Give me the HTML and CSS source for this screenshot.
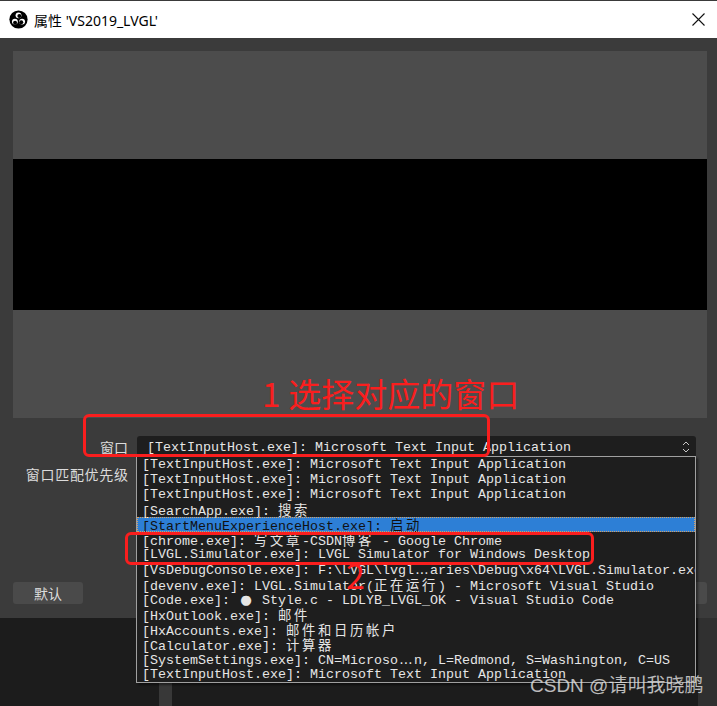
FILE: index.html
```html
<!DOCTYPE html>
<html lang="zh-CN">
<head>
<meta charset="utf-8">
<title>属性 'VS2019_LVGL'</title>
<link rel="stylesheet" href="styles.css">
</head>
<body>
<div class="screen">
  <header class="titlebar">
    <svg class="app-icon" width="19" height="19" viewBox="0 0 20 20">
      <circle cx="10" cy="10" r="9.6" fill="#000"/>
      <circle cx="10" cy="5.6" r="3.1" fill="#fff"/>
      <circle cx="10.9" cy="6.3" r="2.1" fill="#000"/>
      <circle cx="6.2" cy="12.2" r="3.1" fill="#fff"/>
      <circle cx="6.4" cy="13.3" r="2.1" fill="#000"/>
      <circle cx="13.8" cy="12.2" r="3.1" fill="#fff"/>
      <circle cx="12.9" cy="12.8" r="2.1" fill="#000"/>
    </svg>
    <span class="title">属性 'VS2019_LVGL'</span>
    <svg class="close" width="13" height="13" viewBox="0 0 13 13">
      <path d="M0.5 0.5 L12.5 12.5 M12.5 0.5 L0.5 12.5" stroke="#111" stroke-width="1.1" fill="none"/>
    </svg>
  </header>

  <main class="dialog">
    <div class="preview">
      <div class="preview-band"></div>
    </div>

    <div class="form">
      <label class="label">窗口</label>
      <div class="combo">
        <span class="combo-text">[TextInputHost.exe]: Microsoft Text Input Application</span>
        <svg class="chevrons" width="8" height="14" viewBox="0 0 8 14">
          <path d="M1 5 L4 2 L7 5 M1 9 L4 12 L7 9" stroke="#c8c8c8" stroke-width="1" fill="none"/>
        </svg>
      </div>
      <label class="label spaced">窗口匹配优先级</label>
      <div class="combo"></div>
    </div>

    <div class="buttons">
      <button class="btn">默认</button>
      <div class="btn-group">
        <button class="btn">确定</button>
        <button class="btn">取消</button>
      </div>
    </div>
  </main>

  <div class="backdrop">
    <div class="backdrop-bar"></div>
    <div class="backdrop-right"></div>
  </div>

  <ul class="dropdown">
    <li>[TextInputHost.exe]: Microsoft Text Input Application</li>
    <li>[TextInputHost.exe]: Microsoft Text Input Application</li>
    <li>[TextInputHost.exe]: Microsoft Text Input Application</li>
    <li>[SearchApp.exe]: <span class="cjk">搜索</span></li>
    <li class="selected">[StartMenuExperienceHost.exe]: <span class="cjk">启动</span></li>
    <li>[chrome.exe]: <span class="cjk">写文章</span>-CSDN<span class="cjk">博客</span> - Google Chrome</li>
    <li>[LVGL.Simulator.exe]: LVGL Simulator for Windows Desktop</li>
    <li>[VsDebugConsole.exe]: F:\LVGL\lvgl<span class="wide">…</span>aries\Debug\x64\LVGL.Simulator.exe</li>
    <li>[devenv.exe]: LVGL.Simulator(<span class="cjk">正在运行</span>) - Microsoft Visual Studio</li>
    <li>[Code.exe]: <span class="wide">●</span> Style.c - LDLYB_LVGL_OK - Visual Studio Code</li>
    <li>[HxOutlook.exe]: <span class="cjk">邮件</span></li>
    <li>[HxAccounts.exe]: <span class="cjk">邮件和日历帐户</span></li>
    <li>[Calculator.exe]: <span class="cjk">计算器</span></li>
    <li>[SystemSettings.exe]: CN=Microso<span class="wide">…</span>n, L=Redmond, S=Washington, C=US</li>
    <li>[TextInputHost.exe]: Microsoft Text Input Application</li>
  </ul>

  <div class="mark mark-box1"></div>
  <div class="mark mark-text1"><span class="num">1</span>选择对应的窗口</div>
  <div class="mark mark-box2"></div>
  <div class="mark mark-text2">2</div>

  <div class="watermark">CSDN @请叫我晓鹏</div>
</div>
</body>
</html>
```

FILE: styles.css
```css
* { box-sizing: border-box; }

html, body {
  margin: 0;
  padding: 0;
  background: #1c1c1c;
}

.screen {
  position: relative;
  width: 717px;
  height: 706px;
  overflow: hidden;
  display: flex;
  flex-direction: column;
}

/* ---------- title bar ---------- */
.titlebar {
  height: 38px;
  background: #ffffff;
  border-top: 1px solid #3a3a3a;
  display: flex;
  align-items: center;
  padding-left: 9px;
  padding-right: 12px;
}

.app-icon { flex: none; }

.title {
  margin-left: 6px;
  font-family: "Noto Sans", "Noto Sans CJK SC", sans-serif;
  font-size: 14px;
  color: #000;
  flex: 1;
}

.close { flex: none; }

/* ---------- dialog ---------- */
.dialog {
  height: 580px;
  background: #3b3b3b;
  padding: 13px 10px 0 13px;
  display: flex;
  flex-direction: column;
}

.preview {
  height: 367px;
  background: #4c4c4c;
  display: flex;
  flex-direction: column;
  justify-content: center;
}

.preview-band {
  height: 151px;
  background: #000;
}

.form {
  margin-top: 18px;
  display: grid;
  grid-template-columns: 115px 1fr;
  column-gap: 9px;
  row-gap: 5px;
  padding-right: 11px;
}

.label {
  font-family: "Noto Sans CJK SC", sans-serif;
  font-size: 14px;
  color: #dcdcdc;
  text-align: right;
  line-height: 22px;
  height: 22px;
}

.label.spaced { letter-spacing: 0.7px; margin-right: -0.7px; }

.combo {
  height: 22px;
  background: #1e1e1e;
  border-radius: 3px 3px 0 0;
  display: flex;
  align-items: center;
  padding-left: 10px;
  padding-right: 6px;
}

.combo-text {
  flex: 1;
  font-family: "Liberation Mono", monospace;
  font-size: 13.333px;
  color: #e6e6e6;
  white-space: nowrap;
  overflow: hidden;
}

.chevrons { flex: none; }

.buttons {
  margin-top: 97px;
  display: flex;
  justify-content: space-between;
}

.btn-group {
  display: flex;
  gap: 6px;
}

.btn {
  width: 70px;
  height: 22px;
  border: 0;
  border-radius: 3px;
  background: #4a4a4a;
  color: #dcdcdc;
  font-family: "Noto Sans CJK SC", sans-serif;
  font-size: 14px;
  line-height: 22px;
  padding: 0;
}

/* ---------- backdrop (main window behind) ---------- */
.backdrop {
  flex: 1;
  background: #1c1c1c;
  position: relative;
  display: flex;
}

.backdrop-bar {
  margin-left: 159px;
  width: 13px;
  background: #383838;
}

.backdrop-right {
  margin-left: auto;
  width: 19px;
  background: #303030;
}

/* ---------- open dropdown popup ---------- */
.dropdown {
  position: absolute;
  left: 136px;
  top: 456px;
  width: 560px;
  margin: 0;
  padding: 0;
  list-style: none;
  background: #1e1e1e;
  border: 1px solid #a0a0a0;
  box-shadow: 2px 2px 2px rgba(0, 0, 0, 0.45);
  overflow: hidden;
}

.dropdown li {
  height: 15px;
  line-height: 14px;
  padding-top: 1px;
  padding-left: 5px;
  font-family: "Liberation Mono", monospace;
  font-size: 13.333px;
  color: #e6e6e6;
  white-space: nowrap;
}

.dropdown li.selected {
  background: #2d7fd6;
  color: #111;
  outline: 1px dotted #d8a060;
  outline-offset: -1px;
}

.cjk {
  font-family: "Noto Sans CJK SC", sans-serif;
  letter-spacing: 2.667px;
  line-height: 1;
}

.wide {
  display: inline-block;
  width: 16px;
  text-align: center;
  line-height: 1;
  font-family: "DejaVu Sans", sans-serif;
}

/* ---------- red annotations ---------- */
.mark { position: absolute; }

.mark-box1 {
  left: 83px;
  top: 414px;
  width: 407px;
  height: 43px;
  border: 3px solid #fa1e1e;
  border-radius: 6px;
}

.mark-box2 {
  left: 125px;
  top: 532px;
  width: 469px;
  height: 33px;
  border: 3px solid #fa1e1e;
  border-radius: 6px;
}

.mark-text1 {
  left: 262px;
  top: 374px;
  font-family: "Noto Sans CJK SC", sans-serif;
  font-size: 33px;
  line-height: 38px;
  color: #fa1e1e;
  white-space: nowrap;
}

.mark-text1 .num {
  display: inline-block;
  margin-right: 8px;
}

.mark-text2 {
  left: 346px;
  top: 556px;
  font-family: "Noto Sans CJK SC", sans-serif;
  font-size: 34px;
  line-height: 38px;
  color: #fa1e1e;
}

.watermark {
  position: absolute;
  left: 530px;
  top: 674px;
  font-family: "Liberation Sans", "Noto Sans CJK SC", sans-serif;
  font-size: 19px;
  line-height: 24px;
  color: rgba(225, 225, 225, 0.82);
  white-space: nowrap;
}
```
